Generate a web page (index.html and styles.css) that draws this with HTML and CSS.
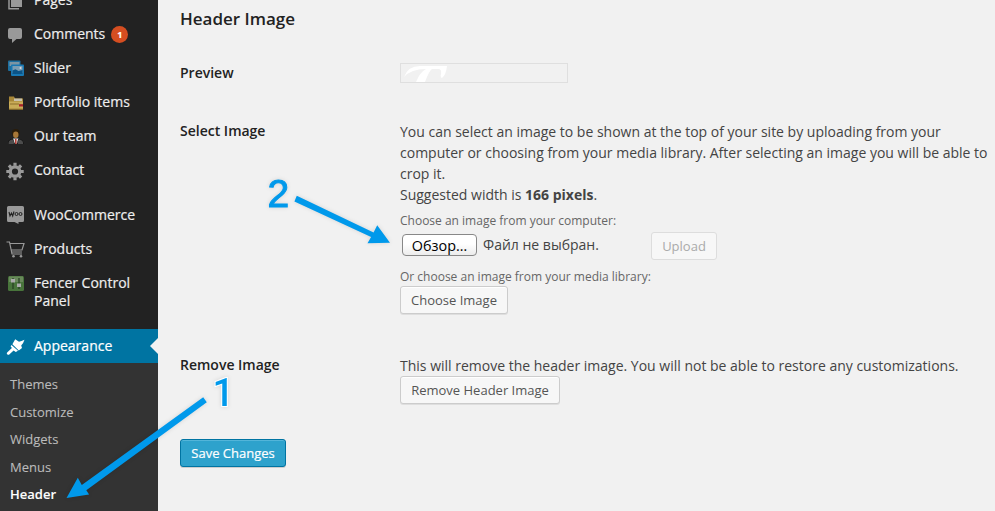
FILE: index.html
```html
<!DOCTYPE html>
<html lang="en">
<head>
<meta charset="utf-8">
<title>Header Image</title>
<link rel="stylesheet" href="styles.css">
</head>
<body>
<div class="page">
  <nav class="sidebar">
    <ul class="menu">
      <li class="item"><svg class="icon" viewBox="0 0 20 20"><path fill="#999" d="M6 3h11v13H6z"/><path fill="none" stroke="#999" stroke-width="1.5" d="M4 5.5v12.2h10"/></svg><span>Pages</span></li>
      <li class="item"><svg class="icon" viewBox="0 0 20 20"><path fill="#999" d="M5 3h10q2 0 2 2v7q0 2-2 2h-3.500l-4.500 4v-4H5q-2 0-2-2V5q0-2 2-2z"/></svg><span>Comments</span><b class="badge">1</b></li>
      <li class="item"><svg class="icon" viewBox="0 0 20 20"><rect x="3" y="1.500" width="12.500" height="10.500" rx="1" fill="#1d6f9f"/><path fill="#7c95a3" d="M4.500 3h10v4h-10z"/><rect x="6" y="5.500" width="13" height="11.500" rx="1" fill="#1878b3"/><path fill="#7c9eb3" d="M7.500 7h10v7h-10z"/><path fill="#0b5487" d="M7.500 11.500l3-1.200 3 1.700 4-1V15h-10z"/><circle cx="15.500" cy="9" r="1" fill="#ddd"/></svg><span>Slider</span></li>
      <li class="item"><svg class="icon" viewBox="0 0 20 20"><path fill="#a88738" d="M4 3.500h5l1 2h8v11H4z"/><path fill="#c8c2b0" d="M9 5.500h8V8H9z"/><path fill="#c9ac58" d="M4 8.500h14v7.500H4z"/><path stroke="#8c6f2b" d="M4 16.200h14M5 11h9"/><path fill="#a7202a" d="M14 11.200h4v2.300h-4z"/></svg><span>Portfolio items</span></li>
      <li class="item"><svg class="icon" viewBox="0 0 20 20"><path fill="#080808" d="M3 17q-.5-4 4-5h7.500q4 1 4 5z"/><path fill="#4c4c4c" d="M3.500 15.500q.5-2.500 4-3.200l2 3.200-1 1.500h-5zM18 15.500q-.5-2.500-4-3.200l-2 3.200 1 1.500h5z"/><path fill="#ddd" d="M8 11.500h5.500L11.500 17H10z"/><path stroke="#b22d24" stroke-width="1.400" d="M10.800 12v5"/><circle cx="10.800" cy="6" r="3.900" fill="#2b1d0a"/><ellipse cx="10.800" cy="7.800" rx="2.700" ry="3.200" fill="#a87838"/></svg><span>Our team</span></li>
      <li class="item"><svg class="icon" viewBox="0 0 20 20"><circle cx="10" cy="10.500" r="4.700" fill="none" stroke="#999" stroke-width="3.200"/><g stroke="#999" stroke-width="3.200"><path d="M10 1.800v3M10 16.200v3M1.300 10.500h3M15.700 10.500h3M3.900 4.400L6 6.500M14 14.500l2.100 2.100M3.900 16.600L6 14.500M14 6.500l2.100-2.100"/></g></svg><span>Contact</span></li>
      <li class="item gap"><svg class="icon" viewBox="0 0 20 20"><path fill="#999" d="M3.500 0h14Q19 0 19 1.500v13q0 1.500-1.500 1.500h-4v2L9.500 16h-6Q2 16 2 14.500v-13Q2 0 3.500 0z"/><path fill="none" stroke="#222" stroke-width="1.100" d="M4 6l1 4 1.500-3 1.200 3L9 5.500"/><circle cx="11.500" cy="8" r="1.500" fill="none" stroke="#222"/><circle cx="15.500" cy="8" r="1.500" fill="none" stroke="#222"/></svg><span>WooCommerce</span></li>
      <li class="item"><svg class="icon" viewBox="0 0 20 20"><g fill="none" stroke="#999" stroke-width="1.200"><path d="M1.500 2h3L7 14h10M5 3.500h14L17 10H6.500M17 12H6.800"/></g><circle cx="8.500" cy="16.300" r="1.300" fill="#999"/><circle cx="16" cy="16.300" r="1.300" fill="#999"/></svg><span>Products</span></li>
      <li class="item"><svg class="icon" viewBox="0 0 20 20"><rect x="3" y="2" width="16" height="15" rx="1.500" fill="#48743b"/><path fill="#69895b" d="M4 2.500h14V8H4z"/><path stroke="#253c20" stroke-width="1.200" d="M8 4v11M14 4v11"/><path fill="#aaa" d="M6 5h4v3.500H6zM12 9.500h4V13h-4z"/></svg><span>Fencer Control Panel</span></li>
      <li class="item gap current"><svg class="icon" viewBox="0 0 20 20"><path fill="#fff" d="M10.200 2.300L14 4.700q2.200-.6 5.500-2-1 3.300-3.300 5.900l.8 2.300-3.200 2.700L7.400 7.200z"/><path fill="#fff" d="M6.500 7.900l6.500 5.900-2.200 1.100-2.200-1.500-4.600 4.300q-1.500.5-2.100-.6-.4-1 .5-1.800l4.500-4.400-1.300-1.600z"/></svg><span>Appearance</span></li>
    </ul>
    <ul class="submenu">
      <li>Themes</li><li>Customize</li><li>Widgets</li><li>Menus</li><li class="active">Header</li>
    </ul>
  </nav>
  <main class="content">
    <h3>Header Image</h3>
    <section class="row preview-row"><h4>Preview</h4>
      <div class="preview"><svg width="166" height="18" viewBox="0 0 166 18"><path fill="#fff" d="M3 13Q7 2 19 2h27q-1 9-5 12-2-1-1-4 1-5-3-5h-6q-3 2-7 13h-9q4-10 10-13Q10 5 3 13z"/></svg></div>
    </section>
    <section class="row select-row"><h4>Select Image</h4>
      <div class="field">
        <p>You can select an image to be shown at the top of your site by uploading from your<br>computer or choosing from your media library. After selecting an image you will be able to<br>crop it.<br>Suggested width is <strong>166 pixels</strong>.</p>
        <label class="hint">Choose an image from your computer:</label>
        <div class="upload"><button class="browse">Обзор…</button><span class="file">Файл не выбран.</span><button class="button disabled">Upload</button></div>
        <label class="hint second">Or choose an image from your media library:</label>
        <button class="button choose">Choose Image</button>
      </div>
    </section>
    <section class="row remove-row"><h4>Remove Image</h4>
      <div class="field"><p>This will remove the header image. You will not be able to restore any customizations.</p><button class="button remove">Remove Header Image</button></div>
    </section>
    <button class="button primary">Save Changes</button>
  </main>
  <svg class="notes" width="995" height="511" viewBox="0 0 995 511">
    <g fill="#0099eb"><path d="M203.200 397.300l3.600 5-120.500 88 2.800 4.300L66.500 498l11.300-20.200 4 7.100z"/><path d="M296.800 195.800l76.800 36.700 3.600-7.300 12.800 17.500-22.500.6 3.600-6.200-76.700-35.700z"/></g>
    <g class="digits"><text x="212.500" y="406">1</text><text class="two" x="267.500" y="207">2</text></g>
  </svg>
</div>
</body>
</html>
```
FILE: styles.css
```css
* { box-sizing: border-box; }
body { margin: 0; font: 14px/21px "Open Sans", sans-serif; color: #444; background: #f1f1f1; }
ul, p, h3, h4 { margin: 0; padding: 0; list-style: none; }
.page { position: relative; display: flex; width: 995px; height: 511px; overflow: hidden; }
.sidebar { width: 158px; flex: none; background: #333; overflow: hidden; }
.menu { margin-top: -17px; background: #222; }
.item { display: flex; align-items: flex-start; min-height: 34px; padding: 8px 10px 8px 5px; color: #eee; line-height: 18px; -webkit-text-stroke: .2px; }
.item.gap { margin-top: 11px; }
.icon { width: 20px; height: 20px; flex: none; margin: 0 9px -2px 0; }
.badge { width: 17px; height: 17px; margin: 1px 0 0 6px; border-radius: 50%; background: #d54e21; color: #fff; font-size: 9px; line-height: 17px; text-align: center; }
.current { position: relative; background: #0074a2; color: #fff; }
.current::after { content: ""; position: absolute; right: 0; top: 9px; border: 8px solid transparent; border-left: 0; border-right-color: #f1f1f1; }
.submenu { padding-top: 8px; font-size: 13px; line-height: 27.500px; color: #bbb; -webkit-text-stroke: .1px; }
.submenu li { padding-left: 10px; }
.submenu .active { color: #fff; font-weight: 600; }
.content { flex: 1; padding: 7px 0 0 22px; }
h3 { font-size: 17px; line-height: 24px; font-weight: 600; color: #222; }
h4 { width: 220px; flex: none; font-size: 14px; line-height: 21px; font-weight: 600; color: #222; }
.row { display: flex; white-space: nowrap; }
.preview-row { margin-top: 31px; height: 58px; }
.preview { width: 168px; height: 20px; margin-top: 1px; border: 1px solid #dfdfdf; }
.preview svg { display: block; }
.select-row { height: 234px; }
.field { margin-top: 1px; }
.hint { display: block; margin: 6px 0 -1px; font-size: 12px; line-height: 20px; color: #666; }
.upload { display: flex; margin-top: 2px; height: 28px; }
.browse { width: 75px; height: 22px; margin: 2px 6px 0 2px; padding: 0; border: 1px solid #888; border-radius: 4px; background: linear-gradient(#fff, #fff 45%, #ececec); color: #000; font: 14.400px/19px "Open Sans", sans-serif; }
.file { width: 168px; line-height: 26px; }
.button { display: block; height: 28px; padding: 1px 10px 0; border: 1px solid #ccc; border-radius: 3px; background: #f7f7f7; box-shadow: 0 1px 0 rgba(0,0,0,.08), inset 0 1px #fff; color: #555; font: 13px/25px "Open Sans", sans-serif; white-space: nowrap; }
.disabled { width: 66px; color: #aaa; border-color: #ddd; box-shadow: none; }
.hint.second { margin-top: 7px; }
.upload + .hint { margin-bottom: -1px; }
.choose { width: 108px; }
.remove { width: 160px; }
.remove-row { height: 85px; }
.primary { width: 106px; background: #2ea2cc; border-color: #0074a2; color: #fff; box-shadow: inset 0 1px rgba(120,200,230,.5), 0 1px 0 rgba(0,0,0,.15); -webkit-text-stroke: .2px; }
.notes { position: absolute; inset: 0; filter: drop-shadow(0 0 2px rgba(0,0,0,.12)); }
.digits { font: 500 38px Roboto, sans-serif; fill: #0099eb; stroke: #fff; stroke-width: 2px; paint-order: stroke; }
.digits .two { font: 39px "Liberation Sans", sans-serif; stroke: #0099eb; stroke-width: 1px; }
```
